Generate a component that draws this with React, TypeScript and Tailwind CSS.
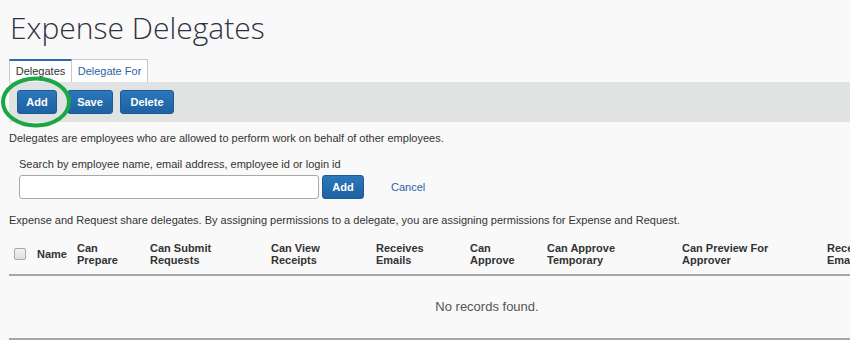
import React from "react";

const cols = [
  { w: "w-[40px]", label: ["", "Name"] },
  { w: "w-[73px]", label: ["Can", "Prepare"] },
  { w: "w-[121px]", label: ["Can Submit", "Requests"] },
  { w: "w-[105px]", label: ["Can View", "Receipts"] },
  { w: "w-[94px]", label: ["Receives", "Emails"] },
  { w: "w-[77px]", label: ["Can", "Approve"] },
  { w: "w-[135px]", label: ["Can Approve", "Temporary"] },
  { w: "w-[145px]", label: ["Can Preview For", "Approver"] },
  { w: "w-[142px]", label: ["Receives", "Emails"] },
];

function BlueButton({ children, className = "" }: { children: React.ReactNode; className?: string }) {
  return (
    <button
      className={
        "h-[24px] rounded-[3px] border border-[#1b5a93] bg-gradient-to-b from-[#2b77bb] to-[#1e62a2] text-[11px] font-bold text-white " +
        className
      }
    >
      {children}
    </button>
  );
}

export default function App() {
  return (
    <div className="h-[340px] w-[850px] overflow-hidden bg-[#f9f9f9] font-['Liberation_Sans',Arial,sans-serif] text-[11px] text-[#333]">
      <h1 className="pl-[10px] pt-[8px] font-['Open_Sans',sans-serif] text-[30px] font-light leading-[40px] text-[#2f3341]">
        Expense Delegates
      </h1>

      <div className="mt-[11px] flex pl-[9px]">
        <div className="flex h-[23px] w-[63px] items-center justify-center border-x border-t-2 border-[#c9c9c9] border-t-[#2a6aae] bg-white text-[#333]">
          Delegates
        </div>
        <div className="flex h-[23px] w-[76px] items-center justify-center border-r border-t border-[#c9c9c9] bg-white text-[#2d62a5]">
          Delegate For
        </div>
      </div>

      <div className="relative ml-[9px] flex h-[40px] items-center gap-[7px] bg-[#e1e3e2] pl-[8px]">
        <BlueButton className="w-[40px]">Add</BlueButton>
        <BlueButton className="ml-[3px] w-[46px]">Save</BlueButton>
        <BlueButton className="w-[54px]">Delete</BlueButton>
        <svg className="absolute left-[-9px] top-[-10px]" width="84" height="64" viewBox="0 0 84 64">
          <ellipse cx="36" cy="30" rx="33" ry="23.5" fill="none" stroke="#19a845" strokeWidth="4" />
        </svg>
      </div>

      <p className="mt-[9px] pl-[9px] leading-[14px]">
        Delegates are employees who are allowed to perform work on behalf of other employees.
      </p>

      <div className="mt-[12px] pl-[19px]">
        <div className="leading-[14px]">Search by employee name, email address, employee id or login id</div>
        <div className="mt-[4px] flex items-center">
          <input className="h-[24px] w-[300px] rounded-[3px] border border-[#a9a9a9] bg-white" />
          <BlueButton className="ml-[3px] w-[42px]">Add</BlueButton>
          <span className="ml-[27px] text-[#2d62a5]">Cancel</span>
        </div>
      </div>

      <p className="mt-[14px] pl-[9px] leading-[14px]">
        Expense and Request share delegates. By assigning permissions to a delegate, you are assigning permissions for
        Expense and Request.
      </p>

      <table className="ml-[9px] mt-[7px] w-[956px] table-fixed border-collapse">
        <thead>
          <tr className="h-[41px] border-b-2 border-[#a6a6a6]">
            <th className="w-[24px] pl-[5px] align-middle">
              <span className="block h-[12px] w-[12px] rounded-[2px] border border-[#a9a9a9] bg-gradient-to-b from-[#f4f4f4] to-[#dedede]" />
            </th>
            {cols.map((c, i) => (
              <th key={i} className={c.w + " pl-[4px] text-left align-middle text-[11px] font-bold leading-[12px] text-[#333]"}>
                {c.label[0] && <div>{c.label[0]}</div>}
                <div>{c.label[1]}</div>
              </th>
            ))}
          </tr>
        </thead>
        <tbody>
          <tr className="h-[64px] border-b-2 border-[#a6a6a6]">
            <td colSpan={10} className="text-center text-[13px] text-[#555]">
              No records found.
            </td>
          </tr>
        </tbody>
      </table>
    </div>
  );
}
